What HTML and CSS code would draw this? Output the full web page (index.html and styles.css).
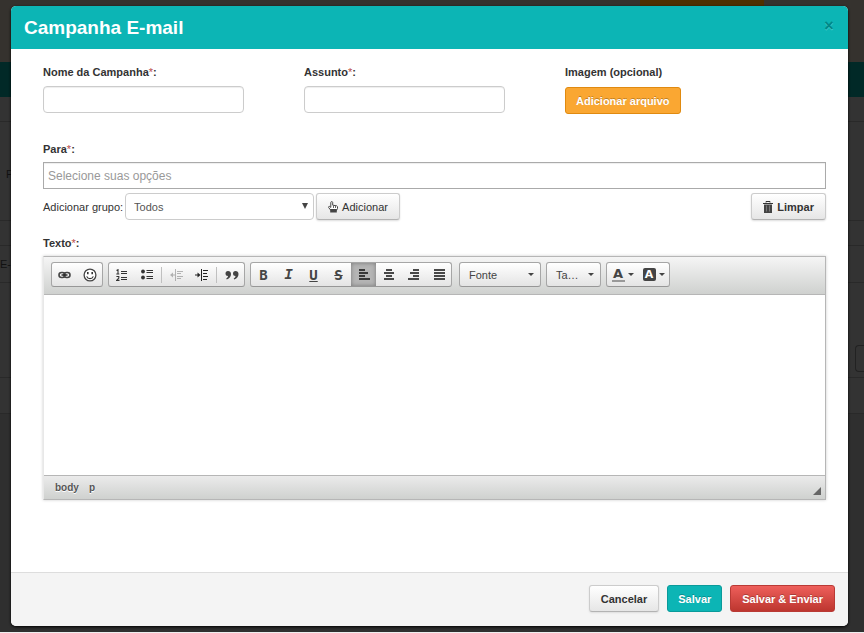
FILE: index.html
```html
<!DOCTYPE html>
<html lang="pt-BR">
<head>
<meta charset="utf-8">
<title>Campanha E-mail</title>
<link rel="stylesheet" href="styles.css">
</head>
<body>
<div class="page" aria-hidden="true">
  <div class="page-top"><span class="page-tab"></span></div>
  <div class="page-nav"></div>
  <div class="page-row"></div>
  <div class="page-row tall">P</div>
  <div class="page-row"></div>
  <div class="page-row mail">E-mail</div>
  <div class="page-row form"><span class="page-box"></span></div>
  <div class="page-row medium"></div>
  <div class="page-row rest"></div>
</div>
<form class="modal" role="dialog" aria-labelledby="title">
  <header class="modal-header">
    <h1 id="title">Campanha E-mail</h1>
    <button type="button" class="close" aria-label="Fechar">×</button>
  </header>
  <div class="modal-body">
    <div class="fields">
      <div class="field">
        <label for="nome">Nome da Campanha<span class="req">*</span>:</label>
        <input id="nome" type="text">
      </div>
      <div class="field">
        <label for="assunto">Assunto<span class="req">*</span>:</label>
        <input id="assunto" type="text">
      </div>
      <div class="field">
        <label for="imagem">Imagem (opcional)</label>
        <button id="imagem" type="button" class="btn orange">Adicionar arquivo</button>
      </div>
    </div>
    <div class="field para">
      <label for="para">Para<span class="req">*</span>:</label>
      <input id="para" class="chosen" type="text" placeholder="Selecione suas opções">
    </div>
    <div class="group-row">
      <label for="grupo">Adicionar grupo:</label>
      <span class="select"><select id="grupo"><option>Todos</option></select></span>
      <button type="button" class="btn regular">
        <svg width="10" height="12" viewBox="0 0 10 12"><path d="M2.800 1.500c0-1.200 1.900-1.200 1.900 0v2.700l4 .6.8.8v2L8.300 9.500H3L.7 6.600c-.5-.9.4-1.600 1.100-1l1 .8z" fill="#fff" stroke="#444"/><path d="M2.200 8h6.600v3.500H2.200z" fill="#444"/><path d="M5.500 5v2M7.500 5v2" stroke="#666"/></svg>
        Adicionar</button>
      <button type="button" class="btn clear">
        <svg width="10" height="12" viewBox="0 0 10 12"><path d="M3 1.500V.5h4v1M0 2.500h10" fill="none" stroke="#333"/><path d="M1 3.500h8V12H1z" fill="#444"/><path d="M3.500 4.500v6M6.500 4.500v6" stroke="#777"/></svg>
        Limpar</button>
    </div>
    <div class="field text">
      <label for="texto">Texto<span class="req">*</span>:</label>
      <div class="editor">
        <div class="toolbar">
          <div class="group">
            <button type="button" aria-label="Link"><svg width="13" height="8" viewBox="0 0 13 8"><rect x="1" y="1.500" width="6" height="5" rx="2.500" fill="none" stroke="#444" stroke-width="1.600"/><rect x="6" y="1.500" width="6" height="5" rx="2.500" fill="none" stroke="#444" stroke-width="1.600"/><path d="M3.500 4h6" stroke="#222" stroke-width="1.400"/></svg></button>
            <button type="button" aria-label="Emoticon"><svg width="14" height="14" viewBox="0 0 14 14"><circle cx="7" cy="7" r="5.900" fill="#fff" stroke="#444" stroke-width="1.300"/><path d="M4 4h1.600v2.200H4zM8.400 4H10v2.200H8.400z" fill="#333"/><path d="M3.700 8.400c1.200 3 5.400 3 6.600 0" fill="none" stroke="#333" stroke-width="1.200"/></svg></button>
          </div>
          <div class="group">
            <button type="button" aria-label="Lista numerada"><svg width="12" height="12" viewBox="0 0 12 12"><path d="M.5 1.500 2 .7V5M.3 5h3M.4 7.500h2.400v1.500L.7 11.400h2.800" fill="none" stroke="#333" stroke-width="1.100"/><path d="M5 2.500h6M5 4.500h6M5 8.500h6M5 10.500h6" stroke="#333" stroke-width="1.200"/></svg></button>
            <button type="button" aria-label="Lista"><svg width="12" height="12" viewBox="0 0 12 12"><circle cx="2" cy="2.500" r="1.900" fill="#333"/><circle cx="2" cy="8.500" r="1.900" fill="#333"/><path d="M5.500 1.500H12M5.500 3.500H12M5.500 7.500H12M5.500 9.500H12" stroke="#333" stroke-width="1.200"/></svg></button>
            <span class="sep"></span>
            <button type="button" disabled aria-label="Diminuir recuo"><svg width="13" height="12" viewBox="0 0 13 12"><path d="M5.500 0v12M7 2.500h6M7 4.500h4M7 7.500h6M7 9.500h4M1 6h4" stroke="#222"/><path d="M0 6l3-2.500v5z" fill="#222"/></svg></button>
            <button type="button" aria-label="Aumentar recuo"><svg width="13" height="12" viewBox="0 0 13 12"><path d="M6.500 0v12M8 1.500h5M8 4.500h4M8 7.500h5M8 10.500h4M0 6h4" stroke="#222"/><path d="M5.500 6l-3-2.500v5z" fill="#222"/></svg></button>
            <span class="sep"></span>
            <button type="button" aria-label="Citação"><svg width="14" height="10" viewBox="0 0 14 10"><path d="M3 1a2.500 2.500 0 1 0 0 5c0 1-.6 1.800-1.800 2.500l.6 1C4.800 8.400 6 6.500 6 4c0-2-1.200-3-3-3zM10.500 1a2.500 2.500 0 1 0 0 5c0 1-.6 1.800-1.800 2.500l.6 1c3-1.100 4.200-3 4.200-5.500 0-2-1.200-3-3-3z" fill="#444"/></svg></button>
          </div>
          <div class="group">
            <button type="button" class="glyph">B</button>
            <button type="button" class="glyph italic">I</button>
            <button type="button" class="glyph underline">U</button>
            <button type="button" class="glyph strike">S</button>
            <button type="button" class="active" aria-label="Alinhar à esquerda"><svg width="12" height="11" viewBox="0 0 12 11"><path d="M1 1h6M1 4h9M1 7h6M1 10h11" stroke="#111" stroke-width="1.700"/></svg></button>
            <button type="button" aria-label="Centralizar"><svg width="12" height="11" viewBox="0 0 12 11"><path d="M3 1h6M1 4h10M3 7h6M1 10h10" stroke="#111" stroke-width="1.700"/></svg></button>
            <button type="button" aria-label="Alinhar à direita"><svg width="12" height="11" viewBox="0 0 12 11"><path d="M5 1h6M2 4h9M5 7h6M0 10h11" stroke="#111" stroke-width="1.700"/></svg></button>
            <button type="button" aria-label="Justificar"><svg width="12" height="11" viewBox="0 0 12 11"><path d="M1 1h11M1 4h11M1 7h11M1 10h11" stroke="#111" stroke-width="1.700"/></svg></button>
          </div>
          <button type="button" class="combo font">Fonte<i class="caret"></i></button>
          <button type="button" class="combo size">Ta…<i class="caret"></i></button>
          <div class="group colors">
            <button type="button" aria-label="Cor do texto"><span class="fg">A</span><i class="caret"></i></button>
            <button type="button" aria-label="Cor de fundo"><span class="bg">A</span><i class="caret"></i></button>
          </div>
        </div>
        <textarea id="texto"></textarea>
        <div class="status"><a href="#">body</a><a href="#">p</a><span class="resizer"></span></div>
      </div>
    </div>
  </div>
  <footer class="modal-footer">
    <button type="button" class="btn">Cancelar</button>
    <button type="button" class="btn teal">Salvar</button>
    <button type="submit" class="btn red">Salvar &amp; Enviar</button>
  </footer>
</form>
</body>
</html>
```
FILE: styles.css
```css
* { box-sizing: border-box; }
body {
  margin: 0;
  min-height: 100vh;
  display: grid;
  overflow: hidden;
  font: 11px/16px "Liberation Sans", Arial, sans-serif;
  color: #333;
  background: #333;
}
button, input, select, textarea { font: inherit; color: inherit; margin: 0; }
button { cursor: pointer; }

.page, .modal { grid-area: 1 / 1; }
.page {
  display: flex;
  flex-direction: column;
  min-width: 0;
  color: #111;
  border-bottom: 1px solid #eee;
}
.page-top { height: 62px; background: #35322e; }
.page-tab { display: block; width: 124px; height: 6px; margin-left: 640px; background: #4e3000; }
.page-nav { height: 35px; background: #012927; }
.page-row { height: 25px; border-bottom: 1px solid #292929; overflow: hidden; }
.page-row.tall { height: 99px; padding: 44px 6px; }
.page-row.mail { height: 37px; padding-top: 10px; }
.page-row.form { display: flex; justify-content: flex-end; height: 95px; padding-top: 62px; }
.page-row.medium { height: 36px; }
.page-row.rest { flex: 1; border: 0; background: #2f2f2f; }
.page-box { width: 9px; height: 27px; border: 1px solid #222; border-right: 0; border-radius: 4px 0 0 4px; }

.modal {
  display: flex;
  flex-direction: column;
  margin: 6px 16px 7px 11px;
  border-radius: 5px;
  background: #fff;
  box-shadow: 0 1px 3px #000;
  overflow: hidden;
}
.modal-header {
  display: flex;
  align-items: center;
  justify-content: space-between;
  height: 43px;
  padding: 0 13px;
  background: #0cb5b5;
}
.modal-header h1 { margin: 0; font-size: 19px; line-height: 24px; color: #fff; }
.close {
  width: 12px;
  height: 18px;
  margin-bottom: 4px;
  padding: 0;
  border: 0;
  background: none;
  font-size: 16px;
  line-height: 18px;
  font-weight: bold;
  color: #088;
  text-shadow: 0 1px 0 #4cc;
}

.modal-body { flex: 1; padding: 15px 22px 0 32px; }
.fields { display: grid; grid-template-columns: repeat(3, 1fr); }
.field { display: flex; flex-direction: column; align-items: flex-start; gap: 6px; }
.field > label { font-weight: bold; }
.req { color: #b94a48; font-weight: normal; }
input {
  width: 201px;
  height: 27px;
  padding: 0 4px;
  border: 1px solid #ccc;
  border-radius: 4px;
  background: #fff;
  box-shadow: inset 0 1px 1px #eee;
}
input.chosen { width: 100%; border-color: #aaa; border-radius: 0; font-size: 12px; }
input::placeholder { color: #999; opacity: 1; }
.para { margin-top: 27px; gap: 5px; }

.btn {
  display: inline-flex;
  align-items: center;
  justify-content: center;
  gap: 4px;
  height: 27px;
  padding: 0 11px;
  border: 1px solid #ccc;
  border-bottom-color: #b3b3b3;
  border-radius: 3px;
  background: linear-gradient(#fff, #e6e6e6);
  box-shadow: 0 1px 2px #ddd;
  font-weight: bold;
  white-space: nowrap;
}
.btn.regular { font-weight: normal; }
.btn.orange, .btn.teal, .btn.red {
  padding: 0 10px;
  color: #fff;
  text-shadow: 0 -1px 0 rgba(0, 0, 0, 0.25);
  box-shadow: none;
}
.btn.orange { margin-top: 1px; background: #faa732; border-color: #e08a10; }
.btn.teal { background: #0cb5b5; border-color: #0a9a9a; }
.btn.red { padding: 0 11px; background: linear-gradient(#ee5f5b, #bd362f); border-color: #b93a35; }
.btn.clear { margin-left: auto; }

.group-row { display: flex; align-items: center; gap: 2px; margin-top: 4px; }
.select { position: relative; width: 189px; }
.select select {
  display: block;
  width: 100%;
  height: 27px;
  padding: 0 8px;
  appearance: none;
  border: 1px solid #ccc;
  border-radius: 4px;
  background: #fff;
  color: #555;
}
.select::after {
  content: "";
  position: absolute;
  right: 6px;
  top: 10px;
  border: 3px solid transparent;
  border-top: 6px solid #444;
  border-bottom: 0;
}

.text { margin-top: 15px; gap: 5px; }
.editor { width: 100%; border: 1px solid #b6b6b6; border-left-color: #e8e8e8; box-shadow: 0 0 3px #ccc; }
.toolbar {
  display: flex;
  gap: 5px;
  height: 38px;
  padding: 5px 7px;
  border-bottom: 1px solid #b6b6b6;
  background: linear-gradient(#f5f5f5, #cfd1cf);
}
.group, .combo {
  display: flex;
  align-items: center;
  height: 25px;
  border: 1px solid #a6a6a6;
  border-bottom-color: #979797;
  border-radius: 3px;
  background: linear-gradient(#fff, #e4e4e4);
}
.group button {
  display: flex;
  align-items: center;
  justify-content: center;
  width: 25px;
  height: 23px;
  padding: 0;
  border: 0;
  background: none;
}
.group button:disabled { opacity: 0.3; }
.group .active { background: #b5b5b5; box-shadow: inset 0 0 4px #777; }
.sep { width: 1px; height: 16px; margin: 0 2px; background: #c0c0c0; }
.group .glyph { font: bold 14px/18px "DejaVu Sans Mono", monospace; color: #444; }
.group .italic { font-style: italic; font-family: "Liberation Mono", monospace; }
.group .underline { text-decoration: underline; }
.group .strike { text-decoration: line-through; }
.combo { justify-content: space-between; padding: 0 6px 0 9px; color: #444; }
.combo.font { width: 82px; margin-left: 2px; }
.combo.size { width: 55px; }
.caret { border: 3px solid transparent; border-top-color: #444; border-bottom: 0; }
.colors button { width: 31px; gap: 3px; }
.fg { width: 13px; height: 15px; border-bottom: 2px solid #999; font: bold 13px/13px "DejaVu Sans", sans-serif; color: #444; }
.bg { width: 13px; height: 13px; border-radius: 2px; background: #444; color: #fff; font: bold 11px/13px "DejaVu Sans", sans-serif; }
textarea { display: block; width: 100%; height: 180px; padding: 8px; border: 0; resize: none; outline: 0; }
.status {
  display: flex;
  align-items: center;
  gap: 10px;
  height: 24px;
  padding: 0 4px 0 11px;
  border-top: 1px solid #b6b6b6;
  background: linear-gradient(#ebebeb, #cfd1cf);
}
.status a { color: #555; font-size: 10px; font-weight: bold; text-decoration: none; text-shadow: 0 1px 0 #fff; }
.resizer { margin: 6px 0 0 auto; border: 4px solid #666; border-top-color: transparent; border-left-color: transparent; }

.modal-footer {
  display: flex;
  justify-content: flex-end;
  gap: 8px;
  padding: 12px 13px 14px;
  border-top: 1px solid #ddd;
  background: #f4f4f4;
}
```
